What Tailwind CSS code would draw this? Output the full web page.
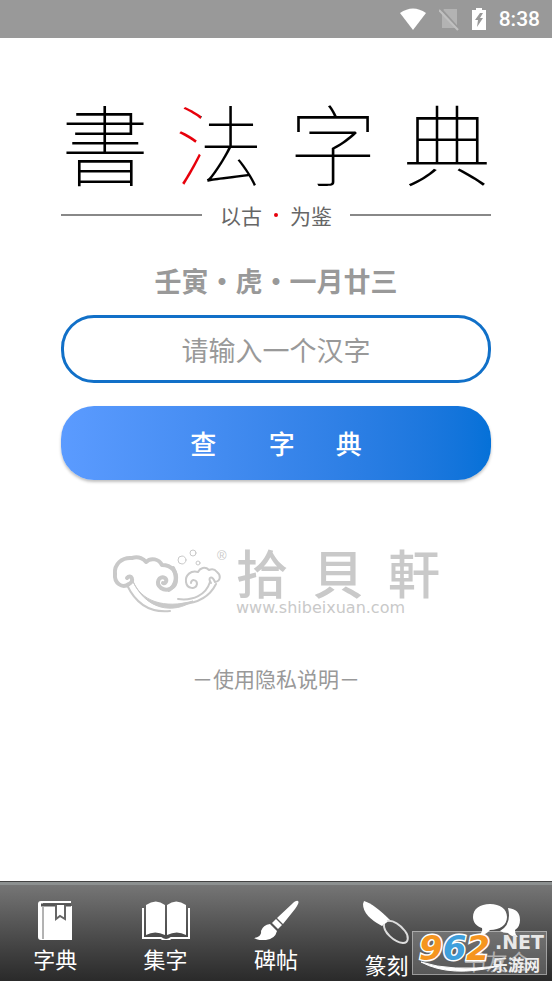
<!DOCTYPE html>
<html lang="zh-CN">
<head>
    <meta charset="UTF-8">
    <meta name="viewport" content="width=device-width, initial-scale=1.0">
    <title>书法字典</title>
    <script src="https://cdn.jsdelivr.net/npm/@tailwindcss/browser@4"></script>
</head>
<body class="bg-white min-h-screen flex flex-col font-['Noto_Sans_CJK_SC',sans-serif]">

    <!-- status bar -->
    <header class="h-[38px] bg-[#999] flex items-center justify-end gap-3 pr-3 text-white">
        <svg class="w-7 h-6" viewBox="0 0 28 24" fill="currentColor"><path d="M1 6 Q14 -3 27 6 L14 23 Z"/></svg>
        <svg class="w-5 h-6" viewBox="0 0 20 24"><path d="M5 2 H18 V21 H3 V5 Z" fill="#b3b3b3"/><path d="M2 2 L21 23" stroke="#999" stroke-width="2"/><path d="M0 3 L19 23" stroke="#c0c0c0" stroke-width="2"/></svg>
        <svg class="w-4 h-6" viewBox="0 0 16 24"><path d="M1 3 H5 V1 H11 V3 H15 V23 H1 Z" fill="#fff"/><path d="M9 6 L4 13 H7 L6 20 L12 11 H9 L12 6 Z" fill="#999"/></svg>
        <span class="font-['Roboto',sans-serif] font-medium text-[21px] leading-6">8:38</span>
    </header>

    <main class="flex-1 flex flex-col px-[61px] pt-[57px]">
        <h1 class="flex justify-between font-thin text-[88px] leading-[92px] text-black">
            <span>書</span>
            <span class="bg-linear-to-r from-red-600 from-30% to-black to-30% bg-clip-text text-transparent">法</span>
            <span>字</span>
            <span>典</span>
        </h1>

        <div class="mt-[14px] flex items-center gap-[18px] text-[21px] leading-7 text-[#666]">
            <span class="h-[2px] flex-1 bg-[#888]"></span>
            <p class="flex items-center gap-3">
                <span>以古</span>
                <span class="size-1 rounded-full bg-red-600"></span>
                <span>为鉴</span>
            </p>
            <span class="h-[2px] flex-1 bg-[#888]"></span>
        </div>

        <form class="mt-8 flex flex-col">
            <label for="hanzi" class="text-center font-bold text-[27px] leading-10 text-[#999]">壬寅・虎・一月廿三</label>
            <input id="hanzi" type="text" placeholder="请输入一个汉字" class="mt-[14px] h-[68px] w-full rounded-[33px] border-3 border-[#1170c8] text-center text-[27px] placeholder:text-[#999] outline-none">
            <button type="button" class="mt-[23px] h-[74px] w-full rounded-[33px] bg-linear-to-r from-[#5b9bff] to-[#0571d8] pb-[2px] text-center text-[26px] font-medium text-white whitespace-pre shadow-[0_2px_3px_rgba(0,0,0,0.25)]">查         字       典</button>
        </form>

        <div class="mt-[66px] flex items-start self-center gap-2 text-[#c9c9c9]">
            <svg class="w-[116px] h-[68px]" viewBox="0 0 116 68" fill="none" stroke="currentColor" stroke-linecap="round" stroke-linejoin="round">
                <path d="M15 32 C19 27 23 35 17 38 C10 43 2 37 3 28 C2 18 10 11 20 12 C27 10 32 13 34 16 C39 11 47 13 50 19 C60 19 65 26 64 34 C64 42 55 46 49 42 C43 37 47 29 53 32 C56 35 53 38 51 37" stroke-width="4"/>
                <path d="M61 22 Q68 36 57 44" stroke-width="4"/>
                <path d="M20 33 C28 56 53 63 81 55 C62 68 33 65 20 33 Z" fill="currentColor" stroke-width="1"/>
                <path d="M15 39 C24 58 38 67 58 65" stroke-width="2"/>
                <path d="M66 53 C81 55 94 49 98 36 M70 58 C88 57 98 50 104 38" stroke-width="2"/>
                <path d="M99 37 C95 31 100 29 103 36 C109 35 109 29 105 26 C102 22 99 23 97 24 C93 20 88 22 86 26 C79 24 73 29 74 36 C75 43 84 44 85 38 C85 33 79 33 79 37" stroke-width="2"/>
                <circle cx="70" cy="14" r="4" stroke-width="1"/>
                <circle cx="81" cy="7" r="3" stroke-width="1"/>
                <circle cx="86" cy="17" r="2" stroke-width="1"/>
                <text x="105" y="14" font-size="13" font-family="Liberation Sans" fill="currentColor" stroke="none">®</text>
            </svg>
            <div class="flex flex-col">
                <p class="flex gap-6 font-medium text-[52px] leading-[52px]"><span>拾</span><span>貝</span><span>軒</span></p>
                <p class="font-['DejaVu_Sans',sans-serif] text-base leading-5">www.shibeixuan.com</p>
            </div>
        </div>

        <a href="#" class="mt-11 self-center text-[21px] leading-8 text-[#999]">－使用隐私说明－</a>
    </main>

    <nav class="relative grid grid-cols-5 h-[100px] border-t border-[#444] bg-linear-to-b from-[#787878] to-[#2a2a2a] shadow-[inset_0_3px_0_#8c9090] pt-[18px] text-white text-[22px] leading-8">
        <a href="#" class="flex flex-col items-center gap-[2px]">
            <svg class="w-12 h-10" viewBox="0 0 48 40">
                <path d="M10 1 H40 V3 H12 V6 H41 V40 H10 Q7 40 7 37 V4 Q7 1 10 1 Z" fill="#fff"/>
                <path d="M10 5 H40" stroke="#555" stroke-width="3"/>
                <path d="M12 7 V39" stroke="#666" stroke-width="1"/>
                <path d="M25 5 V19 L29 16 L34 19 V5" fill="#fff" stroke="#666" stroke-width="2"/>
            </svg>
            <span>字典</span>
        </a>
        <a href="#" class="flex flex-col items-center gap-[2px]">
            <svg class="w-12 h-10" viewBox="0 0 48 40">
                <path d="M1 8 V38 H19 Q24 42 29 38 H47 V8" fill="none" stroke="#fff" stroke-width="2"/>
                <path d="M4 5 Q14 -2 23 5 V35 Q13 30 4 35 Z M25 5 Q34 -2 44 5 V35 Q35 30 25 35 Z" fill="#fff"/>
            </svg>
            <span>集字</span>
        </a>
        <a href="#" class="flex flex-col items-center gap-[2px]">
            <svg class="w-12 h-10" viewBox="0 0 48 40" fill="#fff">
                <path d="M46 1 Q48 2 43 9 L31 24 L25 18 L40 4 Q44 0 46 1 Z"/>
                <path d="M24 19 L30 25 L26 29 L20 23 Z"/>
                <path d="M18 24 L25 31 Q23 39 14 40 Q7 41 2 38 Q10 37 9 31 Q11 25 18 24 Z"/>
            </svg>
            <span>碑帖</span>
        </a>
        <a href="#" class="flex flex-col items-center gap-[2px]">
            <svg class="w-12 h-[46px]" viewBox="0 0 48 46">
                <path d="M2 1 Q12 4 28 20 L20 26 Q1 16 1 4 Z" fill="#fff"/>
                <path d="M22 24 C21 32 32 42 41 43 C47 43 47 36 43 31 C38 25 31 20 25 21" fill="none" stroke="#ddd" stroke-width="2"/>
            </svg>
            <span>篆刻</span>
        </a>
        <a href="#" class="flex flex-col items-center gap-[2px]">
            <svg class="w-12 h-[42px]" viewBox="0 0 48 42" fill="#fff">
                <path d="M35 8 Q47 9 47 20 Q47 27 42 30 Q42 35 45 37 Q38 37 35 33 Q30 33 27 31 Q39 24 35 8 Z"/>
                <path d="M17 4 C27 4 34 9 34 17 C34 25 27 30 17 30 Q12 36 6 35 Q10 32 9 28 C3 26 0 22 0 17 C0 9 7 4 17 4 Z"/>
            </svg>
            <span class="text-white/50">书友会</span>
        </a>

        <!-- 962.NET stamp over the corner of the bar -->
        <div class="absolute right-[5px] bottom-[6px] w-[135px] h-[44px] border border-white/40 bg-white/20">
            <svg class="absolute left-2 bottom-0 w-20 h-4" viewBox="0 0 80 16"><path d="M0 4 Q30 20 78 8 Q30 14 0 4 Z" fill="#fff" stroke="#fff"/></svg>
            <p class="absolute left-[6px] top-0 font-['DejaVu_Sans',sans-serif] font-bold italic text-[34px] leading-8 text-[#f5951f] [-webkit-text-stroke:3px_#fff] [paint-order:stroke_fill]">9<span class="text-[#3f9fdc]">6</span>2</p>
            <p class="absolute right-[2px] top-0 font-['DejaVu_Sans',sans-serif] font-bold text-[19px] leading-5 text-[#e8e8e8]">.NET</p>
            <p class="absolute right-[6px] bottom-0 font-bold text-base leading-5 text-[#eee]">乐游网</p>
        </div>
    </nav>

</body>
</html>
